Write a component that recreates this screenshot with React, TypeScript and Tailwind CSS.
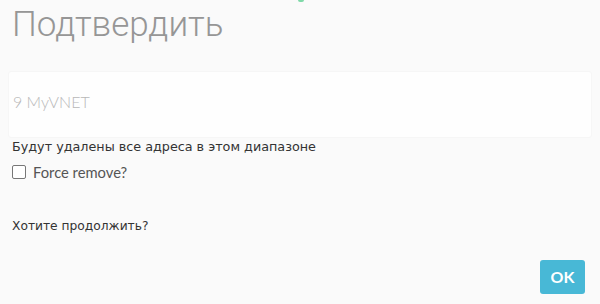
import React from "react";

export default function App() {
  return (
    <div className="relative w-[600px] h-[304px] bg-[#fafafa] overflow-hidden" style={{ fontFamily: "Lato, 'DejaVu Sans', sans-serif" }}>
      <div className="absolute left-[298px] top-0 w-[6px] h-[2px] rounded-b-full bg-[#7fd9a8]" />
      <div className="px-3 pt-[3px]">
        <h1 className="text-[35px] leading-[44px] font-light text-[#969696]" style={{ fontFamily: "Roboto, sans-serif" }}>
          Подтвердить
        </h1>
      </div>
      <div className="mx-2 mt-[24px] h-[67px] bg-[#fefefe] rounded-[3px] border border-[#f6f6f6] flex items-center px-1 pb-[6px]">
        <span className="text-[16px] font-light text-[#b8b8b8]">9 MyVNET</span>
      </div>
      <div className="px-3 mt-[1px] text-[12.75px] leading-[16px] text-[#333]" style={{ fontFamily: "'DejaVu Sans', sans-serif" }}>
        Будут удалены все адреса в этом диапазоне
      </div>
      <label className="px-3 mt-[6px] flex items-center gap-[7px]">
        <span className="w-[14px] h-[14px] rounded-[2px] border-[1.5px] border-[#777] bg-white" />
        <span className="text-[14.75px] text-[#555]">Force remove?</span>
      </label>
      <div className="px-3 mt-[35px] text-[12.25px] leading-[16px] text-[#333]" style={{ fontFamily: "'DejaVu Sans', sans-serif" }}>
        Хотите продолжить?
      </div>
      <div className="flex justify-end pr-[15px] mt-[26px]">
        <button className="w-[45px] h-[34px] rounded-[3px] bg-[#48b8d6] text-white font-bold text-[16px]">OK</button>
      </div>
    </div>
  );
}
